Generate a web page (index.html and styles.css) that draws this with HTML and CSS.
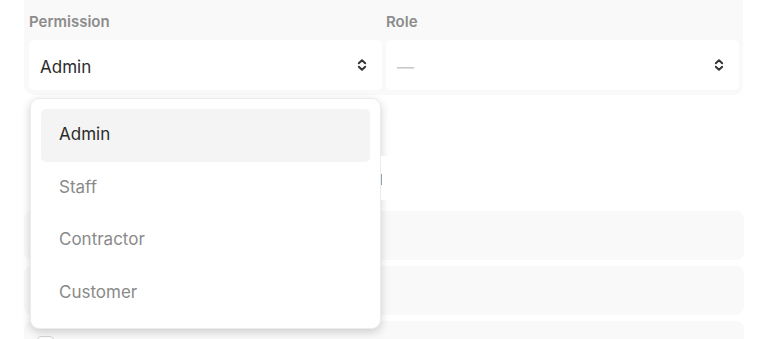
FILE: index.html
```html
<!DOCTYPE html>
<html>
<head>
  <meta charset="UTF-8">
  <title>Member Access</title>
  <link rel="stylesheet" href="styles.css">
</head>
<body>
  <div class="form-wrapper">
    <div class="panel">
      <div class="field">
        <label>Permission</label>
        <div class="select">
          <span class="value">Admin</span>
          <svg class="chevron" width="10" height="14" viewBox="0 0 10 14"><path d="M1.8 5.3 L5 2.2 L8.2 5.3 M1.8 8.7 L5 11.8 L8.2 8.7" fill="none" stroke="#333" stroke-width="1.9" stroke-linecap="round" stroke-linejoin="round"/></svg>
        </div>
      </div>
      <div class="field">
        <label>Role</label>
        <div class="select">
          <span class="placeholder">—</span>
          <svg class="chevron" width="10" height="14" viewBox="0 0 10 14"><path d="M1.8 5.3 L5 2.2 L8.2 5.3 M1.8 8.7 L5 11.8 L8.2 8.7" fill="none" stroke="#333" stroke-width="1.9" stroke-linecap="round" stroke-linejoin="round"/></svg>
        </div>
      </div>
    </div>

    <div class="spacer">
      <div class="input-stub"><span class="caret"></span></div>
    </div>

    <div class="rows">
      <div class="row"></div>
      <div class="row"></div>
      <div class="row"><span class="checkbox"></span></div>
    </div>

    <!-- open permission menu -->
    <ul class="dropdown">
      <li class="option active">Admin</li>
      <li class="option">Staff</li>
      <li class="option">Contractor</li>
      <li class="option">Customer</li>
    </ul>
  </div>
</body>
</html>
```

FILE: styles.css
```css
body {
  margin: 0;
  background-color: #fff;
  font-family: Inter, "Noto Sans", sans-serif;
  overflow: hidden;
}

.form-wrapper {
  position: relative;
  margin-left: 24px;
  width: 720px;
}

.panel {
  display: flex;
  gap: 4px;
  width: 710px;
  padding: 13px 4px 5px 5px;
  background-color: #f9f9f9;
  border-radius: 0 0 10px 10px;
}

.field {
  flex: 1;
  display: flex;
  flex-direction: column;
}

label {
  display: block;
  height: 27px;
  font-size: 15px;
  font-weight: 600;
  color: #8c8c8c;
  line-height: 18px;
}

.select {
  display: flex;
  align-items: center;
  justify-content: space-between;
  height: 50px;
  padding: 3px 15px 0 11px;
  box-sizing: border-box;
  background-color: #fff;
  border-radius: 5px;
  font-size: 17px;
  color: #2b2b2b;
}

.placeholder {
  color: #c8c8c8;
}

.chevron {
  display: block;
  margin-top: -3px;
}

.spacer {
  height: 116px;
  position: relative;
}

.input-stub {
  position: absolute;
  left: 357px;
  top: 61px;
  width: 362px;
  height: 44px;
  background-color: #fff;
  z-index: 2;
}

.caret {
  position: absolute;
  left: 0;
  top: 18px;
  width: 1px;
  height: 11px;
  background-color: #8ea0c0;
}

.rows {
  display: flex;
  flex-direction: column;
  gap: 6px;
}

.row {
  height: 49px;
  background-color: #f9f9f9;
  border-radius: 8px;
  padding: 15px 13px 0;
  box-sizing: border-box;
}

.checkbox {
  display: block;
  width: 15px;
  height: 15px;
  border: 1px solid #d4d4d4;
  border-radius: 4px;
  background-color: #fff;
}

.dropdown {
  position: absolute;
  left: 6px;
  top: 98px;
  width: 351px;
  margin: 0;
  padding: 10px 10px 9px;
  box-sizing: border-box;
  list-style: none;
  background-color: #fff;
  border: 1px solid #ececec;
  border-radius: 9px;
  box-shadow: 0 3px 10px rgba(0, 0, 0, 0.18);
  z-index: 1;
}

.option {
  height: 52.5px;
  line-height: 50px;
  padding-left: 18px;
  border-radius: 5px;
  font-size: 17px;
  color: #8a8a8a;
}

.option.active {
  background-color: #f4f4f4;
  color: #2b2b2b;
}
```
